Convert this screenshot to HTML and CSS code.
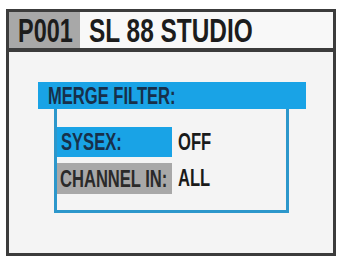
FILE: index.html
```html
<!DOCTYPE html>
<html>
<head>
<meta charset="utf-8">
<link rel="stylesheet" href="styles.css">
</head>
<body>
<div class="screen">
  <div class="header">
    <div class="prog"><span class="cond">P001</span></div>
    <div class="name"><span class="cond">SL 88 STUDIO</span></div>
  </div>
  <div class="content">
    <div class="panel-title"><span class="cond">MERGE FILTER:</span></div>
    <div class="panel-box">
      <div class="row">
        <div class="label label-sel"><span class="cond">SYSEX:</span></div>
        <div class="value"><span class="cond">OFF</span></div>
      </div>
      <div class="row">
        <div class="label label-grey"><span class="cond">CHANNEL IN:</span></div>
        <div class="value"><span class="cond">ALL</span></div>
      </div>
    </div>
  </div>
</div>
</body>
</html>
```

FILE: styles.css
```css
html, body {
  margin: 0;
  padding: 0;
  background: #ffffff;
}
body {
  width: 340px;
  height: 256px;
  overflow: hidden;
  font-family: "Liberation Sans", Arial, sans-serif;
  font-weight: bold;
}
.screen {
  margin: 9px 0 0 6px;
  width: 330px;
  height: 247px;
  box-sizing: border-box;
  border: 3px solid #3c3c3c;
  background: #f4f4f4;
  display: flex;
  flex-direction: column;
}
.cond {
  display: inline-block;
  white-space: nowrap;
  transform: scaleX(0.69);
  transform-origin: left center;
}
.header {
  display: flex;
  height: 40px;
  box-sizing: border-box;
  border-bottom: 4px solid #3c3c3c;
  font-size: 33px;
  line-height: 36px;
  color: #1c1c1c;
}
.header .cond {
  transform: scaleX(0.71);
  padding-top: 1px;
}
.name .cond {
  transform: scaleX(0.74);
}
.prog {
  width: 71px;
  flex: none;
  box-sizing: border-box;
  padding-left: 9px;
  background: #a8a8a8;
  overflow: visible;
}
.name {
  flex: 1;
  padding-left: 9px;
  background: #f8f8f8;
}
.content {
  padding: 30px 0 0 29px;
}
.panel-title {
  width: 268px;
  height: 27px;
  box-sizing: border-box;
  padding-left: 10px;
  background: #19a3e6;
  color: #17304a;
  font-size: 24px;
  line-height: 28px;
}
.panel-box {
  margin-left: 16px;
  width: 235px;
  box-sizing: border-box;
  border: 3px solid #2c97cb;
  border-top: none;
  padding: 18px 0 16px 0;
  display: flex;
  flex-direction: column;
  gap: 6px;
}
.row {
  display: flex;
  font-size: 24px;
}
.label {
  width: 115px;
  height: 30px;
  line-height: 30px;
  box-sizing: border-box;
  padding-left: 4px;
}
.label-sel {
  background: #19a3e6;
  color: #17304a;
}
.label-grey {
  height: 31px;
  line-height: 31px;
  padding-left: 3px;
  background: #a8a8a8;
  color: #2a2a2a;
}
.value {
  padding-left: 6px;
  line-height: 30px;
  color: #1a1a1a;
}
```
